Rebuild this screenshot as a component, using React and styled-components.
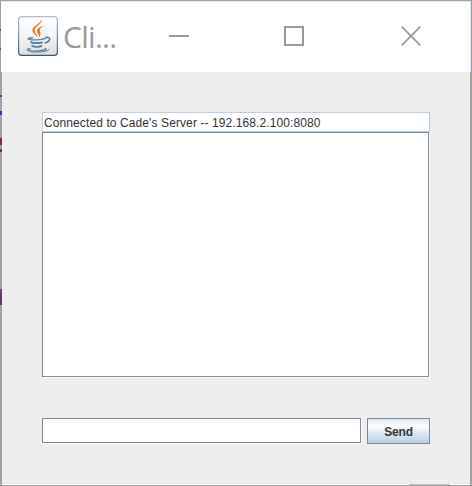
import React from "react";
import styled, { createGlobalStyle } from "styled-components";

const GlobalStyle = createGlobalStyle`
  * { box-sizing: border-box; }
  body { margin: 0; overflow: hidden; }
`;

const Frame = styled.div`
  position: relative;
  display: flex;
  flex-direction: column;
  width: 472px;
  height: 486px;
  padding: 1px 2px;
  background: linear-gradient(#9c9daa 0 72px, #a3a3a3 72px);
  overflow: hidden;
`;

const TitleBar = styled.header`
  display: flex;
  align-items: flex-start;
  flex: 0 0 71px;
  margin: 0 -1px;
  padding: 14px 0 0 16px;
  background: #fff;
  border: solid #e6e7f4;
  border-width: 1px 1px 0 0;
`;

const AppIcon = styled.svg`
  flex: none;
  width: 40px;
  height: 40px;
  margin-left: 1px;
`;

const Title = styled.h1`
  width: 101px;
  margin: 1px 0 0;
  padding-left: 5px;
  color: #999;
  font: 400 30px/40px "Open Sans", "Noto Sans", sans-serif;
  letter-spacing: -0.7px;
  white-space: nowrap;
`;

const WindowControls = styled.div`
  display: flex;
`;

const ControlButton = styled.button`
  display: grid;
  place-items: center;
  width: 40px;
  height: 40px;
  margin: 0 ${(p) => p.$gap || 0}px 0 0;
  padding: 0;
  border: 0;
  background: none;
  color: #999;

  svg { display: block; overflow: visible; }
`;

const Content = styled.main`
  display: flex;
  flex-direction: column;
  flex: 1;
  padding: 40px 40px 0;
  background: #eee;
  border-bottom: 1px solid #fff;
`;

const Status = styled.div`
  flex: none;
  width: 388px;
  height: 20px;
  padding-left: 1px;
  border: 1px solid #b8cfe5;
  background: #fff;
  color: #333;
  font: 12px/20px "Liberation Sans", Arial, sans-serif;
  letter-spacing: 0.1px;
  white-space: nowrap;
`;

const Messages = styled.div`
  flex: 0 0 245px;
  width: 387px;
  border: 1px solid #7a8a99;
  background: #fff;
  box-shadow: 1px 1px #fff;
`;

const Composer = styled.form`
  display: flex;
  align-items: flex-start;
  margin-top: 41px;
`;

const MessageInput = styled.input`
  width: 319px;
  height: 25px;
  margin: 0 6px 0 0;
  padding: 0 2px;
  border: 1px solid #7a8a99;
  border-radius: 0;
  outline: 0;
  background: #fff;
  box-shadow: 1px 1px #fff;
  font: 12px "Liberation Sans", Arial, sans-serif;
`;

const SendButton = styled.button`
  width: 63px;
  height: 26px;
  padding: 1px 0 0;
  border: 1px solid #7a8a99;
  border-radius: 0;
  background: linear-gradient(#dde8f3 0%, #fff 30%, #dde8f3 60%, #b8cfe5 100%);
  color: #333;
  font: bold 12px/20px "Liberation Sans", Arial, sans-serif;
  letter-spacing: -0.2px;
`;

/* Slivers of the desktop that show past the window's edges. */
const BackdropMark = styled.i`
  position: absolute;
  left: 0;
  top: ${(p) => p.$top}px;
  width: ${(p) => p.$width || 2}px;
  height: ${(p) => p.$height}px;
  background: ${(p) => p.$color};
`;

const BottomTab = styled.i`
  position: absolute;
  left: 409px;
  bottom: 0;
  width: 41px;
  height: 2px;
  background: linear-gradient(#c5c5c5 50%, #999 50%);
`;

function JavaIcon() {
  return (
    <AppIcon viewBox="0 0 40 40" aria-hidden="true">
      <defs>
        <linearGradient id="tile" x2="0" y2="1">
          <stop stopColor="#fdfdfd" />
          <stop offset=".5" stopColor="#f4f4f4" />
          <stop offset="1" stopColor="#dedede" />
        </linearGradient>
        <linearGradient id="edge" x2="0" y2="1">
          <stop stopColor="#a5bfd5" />
          <stop offset=".5" stopColor="#7794aa" />
          <stop offset="1" stopColor="#365a75" />
        </linearGradient>
      </defs>
      <rect x=".6" y=".6" width="38.8" height="38.8" rx="3.3" fill="url(#tile)" stroke="url(#edge)" strokeWidth="1.2" />
      <g fill="#e8792b">
        <path d="M23.3 3.2c1.8 5.2-6.9 6.6-6.6 11.1.1 2.6 2.3 4.2 3.3 7-2.1-2-5.8-4.1-5.6-7.2.3-4.5 8.6-6.3 8.9-10.9z" />
        <path d="M26.6 9.4c-3 1.4-5 3-4.9 4.6.1 1.6 2.3 3.6-.7 7.2.7-2.9-2.2-3.5-2.1-6 .1-3.1 3.7-4.9 7.7-5.8z" />
      </g>
      <g fill="none" stroke="#5c82a2" strokeLinecap="round">
        <path d="M14.5 21.7c-3.2.2-6 .9-3.5 1.6 3.6 1 12.5.7 16-.7" strokeWidth="1.4" />
        <path d="M27.6 21.6c5.8-1.4 5.1 3.8-.5 5.4" strokeWidth="1.6" />
        <path d="M13.2 26c.8 1.4 6.8 1.3 10.8.4" strokeWidth="2" />
        <path d="M14.3 29.7c1.6 1.5 5.8 1.5 9 .3" strokeWidth="2" />
        <path d="M12.1 32.5c-9.7 2.7 7.8 3.3 14.4 1.5 2.3-.6 1.6-1.3.7-1.6" strokeWidth="1.3" />
        <path d="M12.7 35.9c6.9.6 16.6.2 18.4-2.4" strokeWidth="1" />
      </g>
    </AppIcon>
  );
}

export default function App() {
  return (
    <>
      <GlobalStyle />
      <Frame>
        <TitleBar>
          <JavaIcon />
          <Title>Cli...</Title>
          <WindowControls>
            <ControlButton aria-label="Minimize" $gap={75}>
              <svg width="20" height="20"><path d="M0 10h20" stroke="currentColor" strokeWidth="2" /></svg>
            </ControlButton>
            <ControlButton aria-label="Maximize" $gap={77}>
              <svg width="20" height="20"><path d="M1 1h18v18H1z" fill="none" stroke="currentColor" strokeWidth="2" /></svg>
            </ControlButton>
            <ControlButton aria-label="Close">
              <svg width="20" height="20"><path d="M.7.7l18.6 18.6M19.3.7L.7 19.3" stroke="currentColor" strokeWidth="1.7" /></svg>
            </ControlButton>
          </WindowControls>
        </TitleBar>
        <Content>
          <Status>Connected to Cade's Server -- 192.168.2.100:8080</Status>
          <Messages />
          <Composer onSubmit={(e) => e.preventDefault()}>
            <MessageInput aria-label="Message" />
            <SendButton>Send</SendButton>
          </Composer>
        </Content>
        <BackdropMark $top={29} $height={2} $width={1} $color="#555" />
        <BackdropMark $top={48} $height={2} $width={1} $color="#555" />
        <BackdropMark $top={95} $height={2} $color="#4b3bc0" />
        <BackdropMark $top={111} $height={4} $color="#4428bd" />
        <BackdropMark $top={138} $height={7} $color="#762a5c" />
        <BackdropMark $top={149} $height={3} $color="#762a5c" />
        <BackdropMark $top={289} $height={16} $color="linear-gradient(#66477f, #7d246b)" />
        <BottomTab />
      </Frame>
    </>
  );
}
